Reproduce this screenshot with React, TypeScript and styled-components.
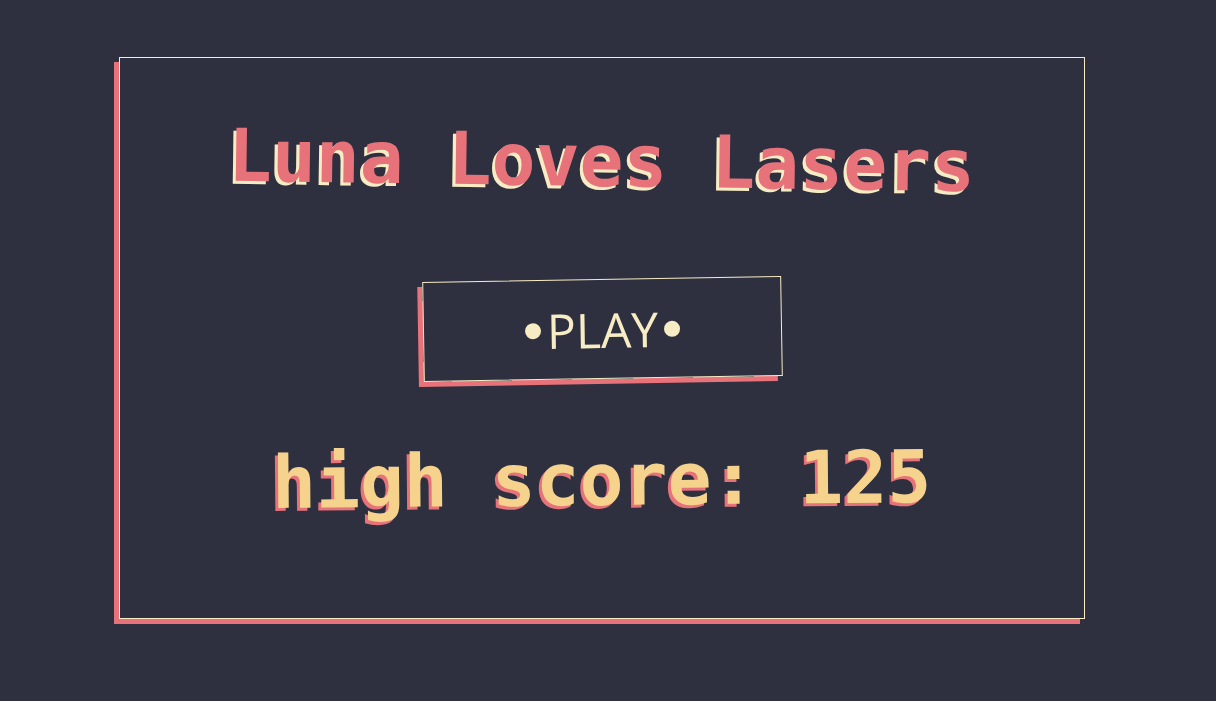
import React from 'react'
import styled, { createGlobalStyle } from 'styled-components'

const colors = {
  background: '#2e3040',
  pink: '#e8727a',
  cream: '#f7ecc4',
  gold: '#f6d38c',
}

const GlobalStyle = createGlobalStyle`
  html, body {
    margin: 0;
    padding: 0;
    background: ${colors.background};
  }
  body {
    width: 1216px;
    height: 701px;
    overflow: hidden;
  }
`

const Screen = styled.div`
  display: flex;
  padding: 57px 0 0 119px;
`

const Menu = styled.main`
  box-sizing: border-box;
  width: 966px;
  height: 562px;
  border: 1px solid ${colors.cream};
  box-shadow: -5px 5px 0 ${colors.pink};
  display: flex;
  flex-direction: column;
  align-items: center;
  padding-top: 67px;
`

const BigText = styled.h1<{ color: string; shadow: string; tilt: number }>`
  margin: 0;
  font-family: 'DejaVu Sans Mono', 'Liberation Mono', monospace;
  font-weight: bold;
  font-size: 73px;
  line-height: 72px;
  white-space: pre;
  color: ${(p) => p.color};
  text-shadow: -3px 3px 0 ${(p) => p.shadow};
  transform: rotate(${(p) => p.tilt}deg);
`

const PlayButton = styled.button`
  box-sizing: border-box;
  margin-top: 82px;
  width: 359px;
  height: 100px;
  background: transparent;
  border: 1px solid ${colors.cream};
  box-shadow: -5px 5px 0 ${colors.pink};
  transform: rotate(-0.95deg);
  color: ${colors.cream};
  font-family: 'Open Sans', 'Noto Sans', sans-serif;
  font-size: 48px;
  font-weight: 500;
  display: flex;
  align-items: center;
  justify-content: center;
  gap: 6px;
  cursor: pointer;
  padding: 0;
`

const Dot = styled.span`
  flex: 0 0 16px;
  height: 16px;
  border-radius: 50%;
  background: ${colors.cream};
  margin-top: 2px;
`

const ScoreLine = styled.div`
  margin-top: 65px;
`

export default function App() {
  return (
    <>
      <GlobalStyle />
      <Screen>
        <Menu>
          <BigText color={colors.pink} shadow={colors.cream} tilt={0.8}>
            Luna Loves Lasers
          </BigText>
          <PlayButton>
            <Dot />
            PLAY
            <Dot />
          </PlayButton>
          <ScoreLine>
            <BigText as="h2" color={colors.gold} shadow={colors.pink} tilt={-0.5}>
              high score: 125
            </BigText>
          </ScoreLine>
        </Menu>
      </Screen>
    </>
  )
}
